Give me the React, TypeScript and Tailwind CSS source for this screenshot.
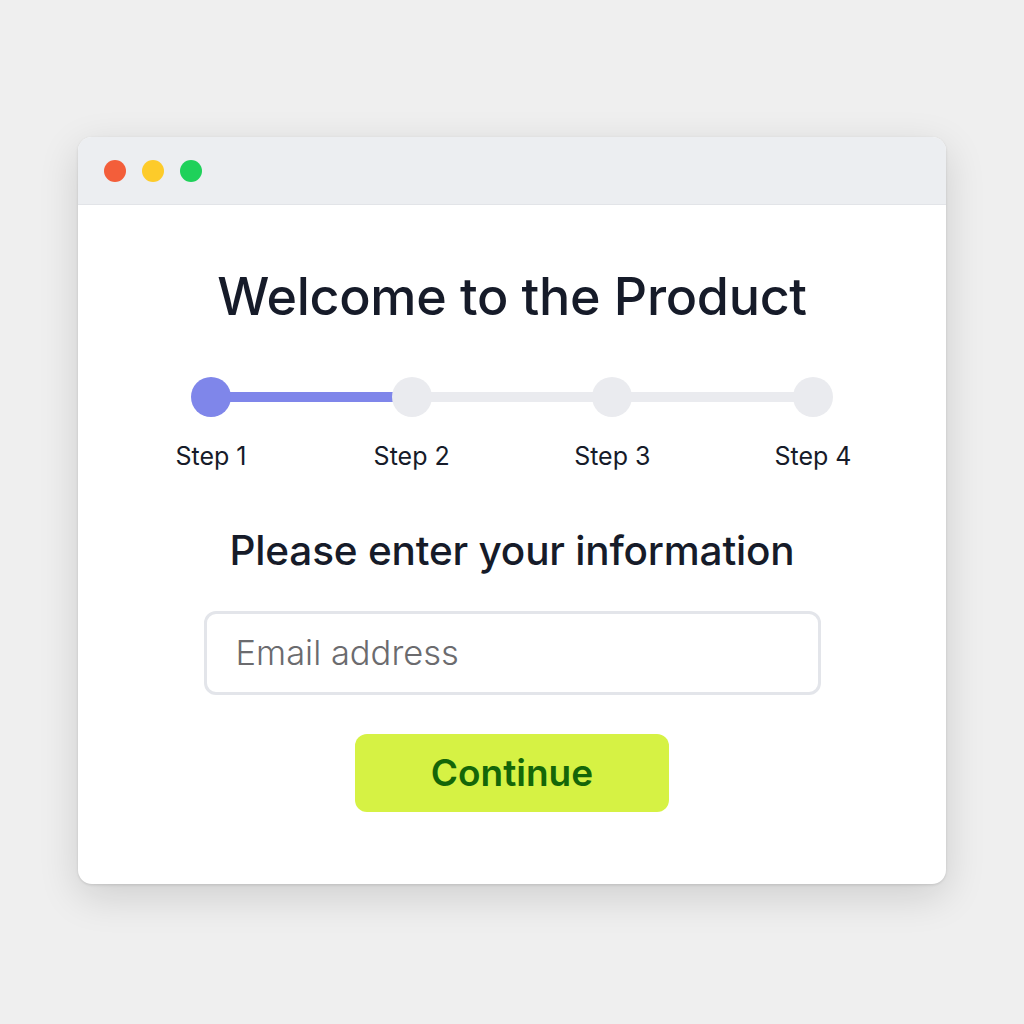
import React from 'react';

const steps = ['Step 1', 'Step 2', 'Step 3', 'Step 4'];

const App = () => {
  return (
    <div
      className="min-h-[1024px] w-full bg-[#efefef] flex justify-center pt-[137px]"
      style={{ fontFamily: 'Inter, "Noto Sans", sans-serif' }}
    >
      <div className="w-[868px] h-[747px] bg-white rounded-[14px] overflow-hidden shadow-[0_12px_40px_rgba(0,0,0,0.14),0_1px_3px_rgba(0,0,0,0.12)] flex flex-col">
        {/* Title bar */}
        <div className="h-[68px] bg-[#eceef1] border-b border-[#e2e4e8] flex items-center gap-[16px] pl-[26px] shrink-0">
          <span className="w-[22px] h-[22px] rounded-full bg-[#f35e3a]" />
          <span className="w-[22px] h-[22px] rounded-full bg-[#fdcb2a]" />
          <span className="w-[22px] h-[22px] rounded-full bg-[#1fd15a]" />
        </div>

        {/* Content */}
        <div className="flex flex-col items-center">
          <h1 className="mt-[62px] text-[52px] leading-[60px] font-medium text-[#161b29] tracking-[-0.3px]">
            Welcome to the Product
          </h1>

          {/* Stepper */}
          <div className="mt-[50px] relative w-[642px]">
            <div className="absolute left-[20px] right-[20px] top-[15px] h-[10px] bg-[#eaebef]" />
            <div className="absolute left-[20px] w-[203px] top-[15px] h-[10px] bg-[#7f86ea]" />
            <div className="relative flex justify-between">
              {steps.map((s, i) => (
                <div key={s} className="w-[40px] flex flex-col items-center">
                  <div
                    className={
                      i === 0
                        ? 'w-[40px] h-[40px] rounded-full bg-[#7f86ea]'
                        : 'w-[40px] h-[40px] rounded-full bg-[#eaebef]'
                    }
                  />
                  <div className="mt-[23px] text-[25px] leading-[32px] text-[#161b29] whitespace-nowrap">
                    {s}
                  </div>
                </div>
              ))}
            </div>
          </div>

          <h2 className="mt-[55px] text-[40.5px] leading-[48px] font-medium text-[#161b29] tracking-[-0.2px]">
            Please enter your information
          </h2>

          <div className="mt-[36px] w-[617px] h-[84px] rounded-[12px] border-[3px] border-[#e3e5ea] flex items-center px-[29px]">
            <span className="text-[34.5px] text-[#6b6b6e] font-light">Email address</span>
          </div>

          <button className="mt-[39px] w-[314px] h-[78px] rounded-[12px] bg-[#d6f244] text-[#146608] text-[37px] font-semibold">
            Continue
          </button>
        </div>
      </div>
    </div>
  );
};

export default App;
